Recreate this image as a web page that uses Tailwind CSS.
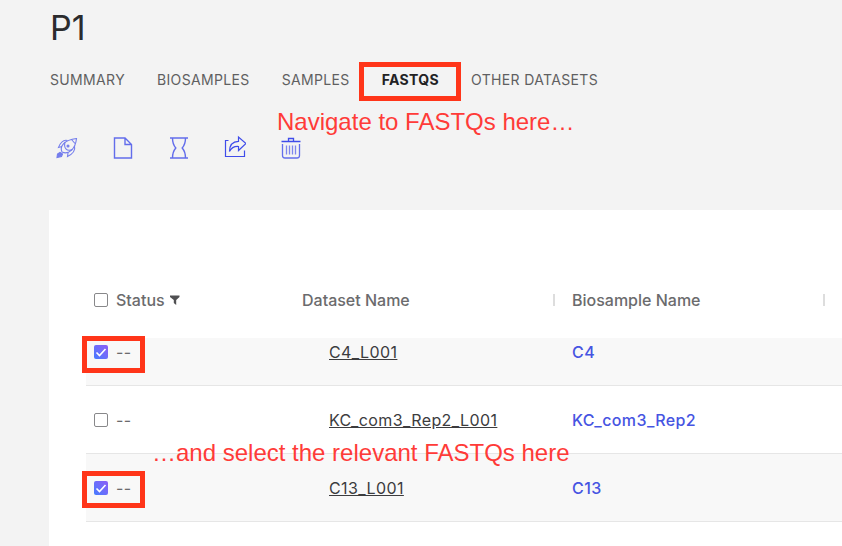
<!DOCTYPE html>
<html lang="en">
<head>
<meta charset="utf-8">
<meta name="viewport" content="width=device-width, initial-scale=1">
<title>P1</title>
<script src="https://cdn.jsdelivr.net/npm/@tailwindcss/browser@4"></script>
</head>
<body class="min-h-screen flex flex-col bg-[#f3f3f3] font-['Inter',sans-serif] text-[#5f5f61] overflow-x-hidden">
<header class="relative pl-[50px] pt-2">
  <h1 class="text-[34px] leading-[40px] text-[#2b2b2d]">P1</h1>
  <nav class="mt-[22px] flex text-sm leading-5 tracking-wide whitespace-nowrap gap-8" aria-label="Project">
    <a href="#summary">SUMMARY</a>
    <a href="#biosamples">BIOSAMPLES</a>
    <a href="#samples">SAMPLES</a>
    <a href="#fastqs" aria-current="page" class="relative font-bold text-[#222224]">FASTQS<span class="absolute -left-[23px] -right-[22px] -top-2 -bottom-[11px] border-5 border-[#ff3519]"></span></a>
    <a href="#other">OTHER DATASETS</a>
  </nav>
  <div class="mt-[45px] flex gap-8 pl-1 text-[#3f4cea]">
    <button type="button" aria-label="Launch" class="size-6"><svg viewBox="0 0 24 24" class="size-6" fill="none" stroke="currentColor" stroke-width="1.100" opacity=".7"><path d="M8 17C5.500 12 9.500 5 22.500 3.500C21.500 14 14.500 20 8 17Z"/><path d="M13.500 5.500C9.500 4.500 6.500 7.500 4.500 12.500L8 11.500M20.500 11C21.500 15 18.500 19 13.500 21.500L14 18M17.500 4.500L21 8.500M11 7C9.500 13 12.500 17 18.500 14.500"/><circle cx="14" cy="11" r="1" fill="currentColor"/><path d="M3 22.500L3.500 19L6 17.500L8.500 19L7.500 21.500Z" fill="currentColor"/></svg></button>
    <button type="button" aria-label="New file" class="size-6"><svg viewBox="0 0 24 24" class="size-6" fill="none" stroke="currentColor" stroke-width="1.400" opacity=".8"><path d="M4.500 3H15L21.500 9.500V23H4.500ZM15 3V9.500H21.500"/></svg></button>
    <button type="button" aria-label="Pending" class="size-6"><svg viewBox="0 0 24 24" class="size-6" fill="none" stroke="currentColor" stroke-width="1.400" opacity=".8"><path d="M4 3H22M4 23H22M6.500 3C6.500 7.500 7.200 10 9.800 13C7.200 16 6.500 18.500 6.500 23M19.500 3C19.500 7.500 18.800 10 16.200 13C18.800 16 19.500 18.500 19.500 23"/></svg></button>
    <button type="button" aria-label="Share" class="size-6"><svg viewBox="0 0 24 24" class="size-6" fill="none" stroke="currentColor" stroke-width="1.200"><path d="M6.500 5.500H3.500V21.500H22.500V15.500"/><path d="M7.500 16.500C7.500 10 11 6.500 16.500 6.300V2L24 8.500L16.500 15.500V11.500C12.500 11.200 9.500 12.500 7.500 16.500Z"/></svg></button>
    <button type="button" aria-label="Delete" class="size-6"><svg viewBox="0 0 24 24" class="size-6" fill="none" stroke="currentColor" stroke-width="1.300"><path d="M3.500 6.500H22.500M10.500 6V3.500H15.500V6"/><path d="M4.500 9V20.500C4.500 22.200 5.500 23 7 23H19C20.500 23 21.500 22.200 21.500 20.500V9" opacity=".8"/><path d="M8.500 10.500V19.500M11.500 10.500V19.500M14.500 10.500V19.500M17.500 10.500V19.500" opacity=".65"/></svg></button>
  </div>
  <p class="absolute left-[277px] top-[108px] font-['Liberation_Sans',sans-serif] text-2xl leading-7 text-[#ff3b38] whitespace-nowrap">Navigate to FASTQs here…</p>
</header>
<main class="relative mt-[51px] ml-[49px] grow bg-white pl-[37px] pt-[52px]">
  <table class="w-full table-fixed border-collapse text-base leading-6 tracking-wide text-left">
    <colgroup><col class="w-[198px]"><col class="w-[271px]"><col class="w-[270px]"><col></colgroup>
    <thead>
      <tr class="h-[76px] text-[#6b6b6d] tracking-normal">
        <th class="p-0 pl-2 font-medium"><div class="flex items-center"><label class="flex items-center gap-2"><input type="checkbox" class="appearance-none size-3.5 rounded-xs border border-[#88888a] bg-white">Status</label>
          <button type="button" aria-label="Filter status" class="ml-1"><svg viewBox="0 0 12 12" class="size-3" fill="#505052"><path d="M1 1.500H10.500V3L7.200 6V11L4.800 9V6L1 3Z"/></svg></button></div></th>
        <th class="p-0 pl-[18px] font-medium"><div class="flex items-center justify-between">Dataset Name<span class="h-3 w-0.5 bg-[#dddddd]"></span></div></th>
        <th class="p-0 pl-[17px] font-medium"><div class="flex items-center justify-between">Biosample Name<span class="h-3 w-0.5 bg-[#dddddd]"></span></div></th>
        <th class="p-0"></th>
      </tr>
    </thead>
    <tbody class="text-[#3c3c3e]">
      <tr class="h-[47px] bg-[#f8f8f8] border-b border-[#e6e6e6]">
        <td class="relative p-0 pl-2 pb-[19px]"><label class="flex items-center gap-2 text-[#6b6b6d]"><input type="checkbox" checked class="appearance-none size-3.5 rounded-xs bg-linear-to-tr from-[#3f7bff] to-[#8b5cf6]"><svg viewBox="0 0 14 14" class="pointer-events-none absolute left-2 size-3.5" fill="none" stroke="#fff" stroke-width="1.600"><path d="M2.500 7.500L5.500 10.500L11.500 4"/></svg>--</label>
          <span class="absolute -left-1 -top-0.5 h-[37px] w-[63px] border-5 border-[#ff3519]"></span></td>
        <td class="p-0 pl-[45px] pb-[19px]"><a href="#c4" class="underline">C4_L001</a></td>
        <td class="p-0 pl-[17px] pb-[19px]"><a href="#b4" class="font-medium text-[#4654e2]">C4</a></td>
        <td></td>
      </tr>
      <tr class="h-[68px] border-b border-[#e6e6e6]">
        <td class="p-0 pl-2 pt-0.5"><label class="flex items-center gap-2 text-[#6b6b6d]"><input type="checkbox" class="appearance-none size-3.5 rounded-xs border border-[#88888a] bg-white">--</label></td>
        <td class="p-0 pl-[45px] pt-0.5"><a href="#kc" class="underline">KC_com3_Rep2_L001</a></td>
        <td class="p-0 pl-[17px] pt-0.5"><a href="#bkc" class="font-medium text-[#4654e2]">KC_com3_Rep2</a></td>
        <td></td>
      </tr>
      <tr class="h-[68px] bg-[#f8f8f8] border-b border-[#e6e6e6]">
        <td class="relative p-0 pl-2 pt-0.5"><label class="flex items-center gap-2 text-[#6b6b6d]"><input type="checkbox" checked class="appearance-none size-3.5 rounded-xs bg-linear-to-tr from-[#3f7bff] to-[#8b5cf6]"><svg viewBox="0 0 14 14" class="pointer-events-none absolute left-2 size-3.5" fill="none" stroke="#fff" stroke-width="1.600"><path d="M2.500 7.500L5.500 10.500L11.500 4"/></svg>--</label>
          <span class="absolute -left-1 top-[17px] h-[37px] w-[63px] border-5 border-[#ff3519]"></span></td>
        <td class="p-0 pl-[45px] pt-0.5"><a href="#c13" class="underline">C13_L001</a></td>
        <td class="p-0 pl-[17px] pt-0.5"><a href="#b13" class="font-medium text-[#4654e2]">C13</a></td>
        <td></td>
      </tr>
    </tbody>
  </table>
  <p class="absolute left-[103px] top-[229px] font-['Liberation_Sans',sans-serif] text-2xl leading-7 text-[#ff3b38] whitespace-nowrap">…and select the relevant FASTQs here</p>
</main>
</body>
</html>
